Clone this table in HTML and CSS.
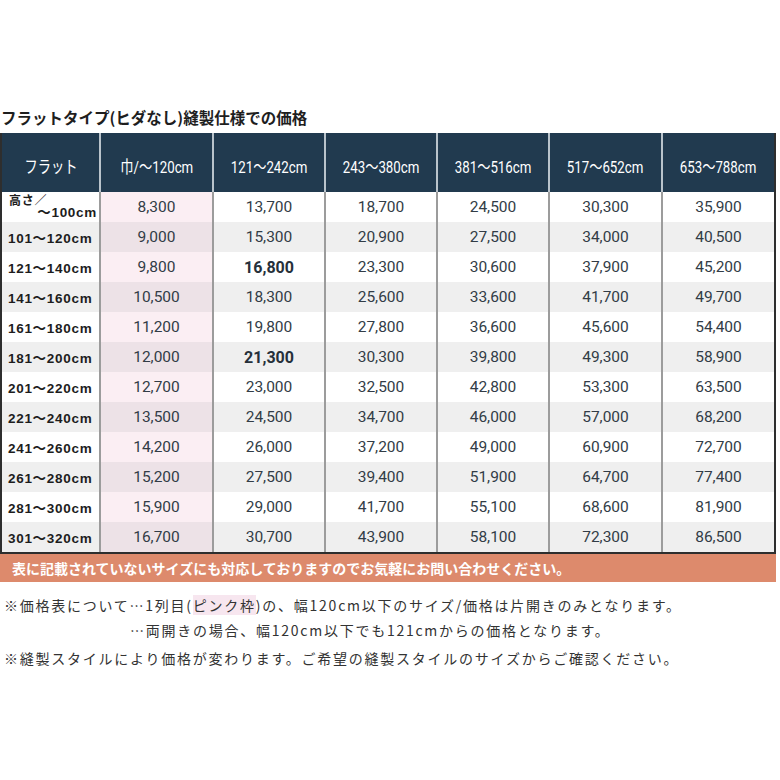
FILE: index.html
```html
<!DOCTYPE html>
<html lang="ja">
<head>
<meta charset="utf-8">
<link rel="stylesheet" href="styles.css">
</head>
<body>
<div class="page">
  <h2 class="title">フラットタイプ(ヒダなし)縫製仕様での価格</h2>
  <div class="grid">
    <div class="hd first"><span class="nar">フラット</span></div>
    <div class="hd"><span class="nar">巾/〜120cm</span></div>
    <div class="hd"><span class="nar">121〜242cm</span></div>
    <div class="hd"><span class="nar">243〜380cm</span></div>
    <div class="hd"><span class="nar">381〜516cm</span></div>
    <div class="hd"><span class="nar">517〜652cm</span></div>
    <div class="hd"><span class="nar">653〜788cm</span></div>

    <div class="rh two"><span class="l1">高さ／</span><span class="l2">〜100cm</span></div>
    <div class="c pk">8,300</div><div class="c">13,700</div><div class="c">18,700</div><div class="c">24,500</div><div class="c">30,300</div><div class="c">35,900</div>

    <div class="rh g">101〜120cm</div>
    <div class="c pk g">9,000</div><div class="c g">15,300</div><div class="c g">20,900</div><div class="c g">27,500</div><div class="c g">34,000</div><div class="c g">40,500</div>

    <div class="rh">121〜140cm</div>
    <div class="c pk">9,800</div><div class="c b">16,800</div><div class="c">23,300</div><div class="c">30,600</div><div class="c">37,900</div><div class="c">45,200</div>

    <div class="rh g">141〜160cm</div>
    <div class="c pk g">10,500</div><div class="c g">18,300</div><div class="c g">25,600</div><div class="c g">33,600</div><div class="c g">41,700</div><div class="c g">49,700</div>

    <div class="rh">161〜180cm</div>
    <div class="c pk">11,200</div><div class="c">19,800</div><div class="c">27,800</div><div class="c">36,600</div><div class="c">45,600</div><div class="c">54,400</div>

    <div class="rh g">181〜200cm</div>
    <div class="c pk g">12,000</div><div class="c g b">21,300</div><div class="c g">30,300</div><div class="c g">39,800</div><div class="c g">49,300</div><div class="c g">58,900</div>

    <div class="rh">201〜220cm</div>
    <div class="c pk">12,700</div><div class="c">23,000</div><div class="c">32,500</div><div class="c">42,800</div><div class="c">53,300</div><div class="c">63,500</div>

    <div class="rh g">221〜240cm</div>
    <div class="c pk g">13,500</div><div class="c g">24,500</div><div class="c g">34,700</div><div class="c g">46,000</div><div class="c g">57,000</div><div class="c g">68,200</div>

    <div class="rh">241〜260cm</div>
    <div class="c pk">14,200</div><div class="c">26,000</div><div class="c">37,200</div><div class="c">49,000</div><div class="c">60,900</div><div class="c">72,700</div>

    <div class="rh g">261〜280cm</div>
    <div class="c pk g">15,200</div><div class="c g">27,500</div><div class="c g">39,400</div><div class="c g">51,900</div><div class="c g">64,700</div><div class="c g">77,400</div>

    <div class="rh">281〜300cm</div>
    <div class="c pk">15,900</div><div class="c">29,000</div><div class="c">41,700</div><div class="c">55,100</div><div class="c">68,600</div><div class="c">81,900</div>

    <div class="rh g">301〜320cm</div>
    <div class="c pk g">16,700</div><div class="c g">30,700</div><div class="c g">43,900</div><div class="c g">58,100</div><div class="c g">72,300</div><div class="c g">86,500</div>
  </div>
  <div class="banner">表に記載されていないサイズにも対応しておりますのでお気軽にお問い合わせください。</div>
  <div class="notes">
    <p class="n1">※価格表について…1列目(<span class="pinkmark">ピンク枠</span>)の、幅120cm以下のサイズ/価格は片開きのみとなります。</p>
    <p class="n2">…両開きの場合、幅120cm以下でも121cmからの価格となります。</p>
    <p class="n3">※縫製スタイルにより価格が変わります。ご希望の縫製スタイルのサイズからご確認ください。</p>
  </div>
</div>
</body>
</html>
```

FILE: styles.css
```css
* { box-sizing: border-box; }
html, body { margin: 0; padding: 0; background: #fff; }
body { font-family: "Noto Sans CJK JP", "Noto Sans", sans-serif; color: #333; }
.page { width: 780px; padding-top: 107px; }

.title {
  margin: 0 0 6px 1px;
  font-size: 15.5px;
  line-height: 20px;
  font-weight: 700;
  color: #1e1e1e;
  letter-spacing: 0;
}

.grid {
  width: 776px;
  display: grid;
  grid-template-columns: 97px 113px 112px 112px 112px 113px 113px;
  grid-template-rows: 59px repeat(12, 30px);
  border-left: 2px solid #2e2e2e;
  border-right: 2px solid #2e2e2e;
  border-bottom: 2px solid #2e2e2e;
}

.hd {
  background: #213a4f;
  color: #fff;
  display: flex;
  align-items: center;
  justify-content: center;
  border-left: 2px solid #b9c3cb;
  padding-top: 5px;
  font-family: "Roboto", "Noto Sans CJK JP", sans-serif;
  font-size: 17px;
  white-space: nowrap;
}
.hd.first { border-left: none; }
.nar { display: inline-block; transform: scaleX(0.78); }

.rh {
  display: flex;
  align-items: center;
  padding-left: 6px;
  font-family: "Liberation Sans", "Noto Sans CJK JP", sans-serif;
  font-weight: 700;
  font-size: 13.5px;
  letter-spacing: 0.7px;
  color: #1d1d1d;
  background: #fff;
  white-space: nowrap;
}
.rh.two {
  flex-direction: column;
  align-items: stretch;
  justify-content: center;
  line-height: 12px;
}
.rh.two .l1 { font-size: 12px; text-align: left; padding-left: 1px; }
.rh.two .l2 { text-align: right; padding-right: 2px; }

.c {
  display: flex;
  align-items: center;
  justify-content: center;
  border-left: 2px solid #9c9c9c;
  background: #fff;
  font-family: "Roboto", "Noto Sans", sans-serif;
  font-size: 15.5px;
  color: #323c46;
}
.c.b { font-weight: 700; font-size: 16px; color: #26303a; }
.g { background: #efefef; }
.c.pk { background: #fbeef3; }
.c.pk.g { background: #ede2e7; }

.banner {
  width: 776px;
  height: 28px;
  background: #dd8a6c;
  color: #fff;
  font-weight: 700;
  font-size: 14px;
  line-height: 28px;
  padding-left: 12px;
  letter-spacing: 0;
}

.notes { padding-top: 11px; }
.notes p {
  margin: 0;
  font-size: 14px;
  letter-spacing: 1.75px;
  color: #333;
  white-space: nowrap;
}
.n1 { line-height: 24px; padding-left: 4px; }
.n2 { line-height: 24px; padding-left: 130px; margin-top: 1px !important; }
.n3 { line-height: 24px; padding-left: 4px; margin-top: 4px !important; }
.pinkmark { background: #f7e6ef; }
```
